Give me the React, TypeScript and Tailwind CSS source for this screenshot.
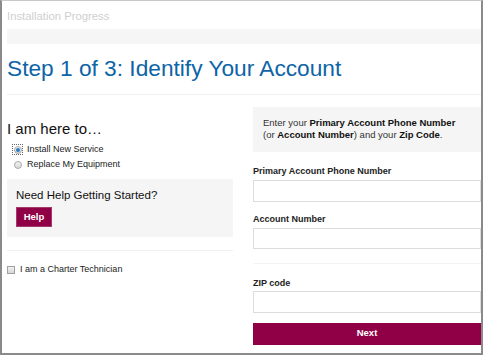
import React from 'react';

const font = "font-['Liberation_Sans',Arial,sans-serif]";

function Radio({ checked }: { checked?: boolean }) {
  return (
    <span
      className={`flex h-[9px] w-[9px] items-center justify-center ${
        checked ? 'outline-1 outline-dotted outline-[#666]' : ''
      }`}
    >
      <span className="flex h-[8px] w-[8px] items-center justify-center rounded-full border border-[#a9a9a9] bg-gradient-to-b from-[#f4f4f4] to-[#d8d8d8]">
        {checked && <span className="h-[4px] w-[4px] rounded-full bg-[#2a7fc4]" />}
      </span>
    </span>
  );
}

function Field({ label, mt, h }: { label: string; mt: string; h: string }) {
  return (
    <>
      <div className={`${mt} text-[9px] font-bold leading-[12px] text-[#222]`}>{label}</div>
      <input
        type="text"
        className={`mt-[3px] ${h} w-full border border-[#dcdcdc] bg-white outline-none`}
      />
    </>
  );
}

export default function App() {
  return (
    <div className={`h-[357px] w-[484px] bg-white ${font}`}>
      <div className="h-[355px] w-[483px] border-2 border-t border-[#8a8a8a] border-t-[#c8c8c8] pl-[5px]">
        <div className="pt-[9px] text-[11.3px] leading-[13px] text-[#cfcfcf]">Installation Progress</div>
        <div className="mt-[6px] h-[15px] bg-[#f6f6f6]" />

        <h1 className="mt-[11px] text-[22.7px] leading-[26px] text-[#0d64a6]">
          Step 1 of 3: Identify Your Account
        </h1>
        <div className="mt-[13px] border-t border-[#efefef]" />

        <div className="flex gap-[20px]">
          {/* left column */}
          <div className="w-[226px] text-[#222]">
            <div className="mt-[25px] text-[15px] leading-[18px] text-[#111]">I am here to…</div>
            <div className="mt-[4px] flex h-[15px] items-center gap-[5px] pl-[6px] text-[9px]">
              <Radio checked />
              <span>Install New Service</span>
            </div>
            <div className="flex h-[15px] items-center gap-[5px] pl-[6px] text-[9px]">
              <Radio />
              <span>Replace My Equipment</span>
            </div>

            <div className="mt-[7px] h-[58px] bg-[#f5f5f5] pl-[9px] pt-[9px]">
              <div className="text-[11.5px] leading-[14px] text-[#111]">Need Help Getting Started?</div>
              <button className="mt-[5px] h-[20px] w-[36px] border border-[#a23a6c] bg-[#8f0047] text-[9.5px] font-bold text-white">
                Help
              </button>
            </div>

            <div className="mt-[13px] border-t border-[#efefef]" />
            <div className="mt-[11px] flex h-[15px] items-center gap-[5px] text-[9px]">
              <span className="h-[8px] w-[8px] border border-[#a0a0a0] bg-gradient-to-b from-[#f2f2f2] to-[#d6d6d6]" />
              <span>I am a Charter Technician</span>
            </div>
          </div>

          {/* right column */}
          <div className="flex-1 text-[#222]">
            <div className="mt-[12px] h-[45px] bg-[#f5f5f5] pl-[10px] pt-[10px] text-[9.5px] leading-[12px] text-[#333]">
              <div>
                Enter your <b className="text-[#111]">Primary Account Phone Number</b>
              </div>
              <div>
                (or <b className="text-[#111]">Account Number</b>) and your <b className="text-[#111]">Zip Code</b>.
              </div>
            </div>

            <Field label="Primary Account Phone Number" mt="mt-[13px]" h="h-[22px]" />
            <Field label="Account Number" mt="mt-[10px]" h="h-[21px]" />

            <div className="mt-[12px] border-t border-[#f3f3f3]" />

            <div className="mt-[13px] text-[9px] font-bold leading-[12px] text-[#222]">ZIP code</div>
            <input
              type="text"
              className="mt-[2px] h-[22px] w-full border border-[#dcdcdc] bg-white outline-none"
            />
            <button className="mt-[9px] h-[22px] w-full bg-[#8f0047] text-[9.5px] font-bold text-white">
              Next
            </button>
          </div>
        </div>
      </div>
    </div>
  );
}
